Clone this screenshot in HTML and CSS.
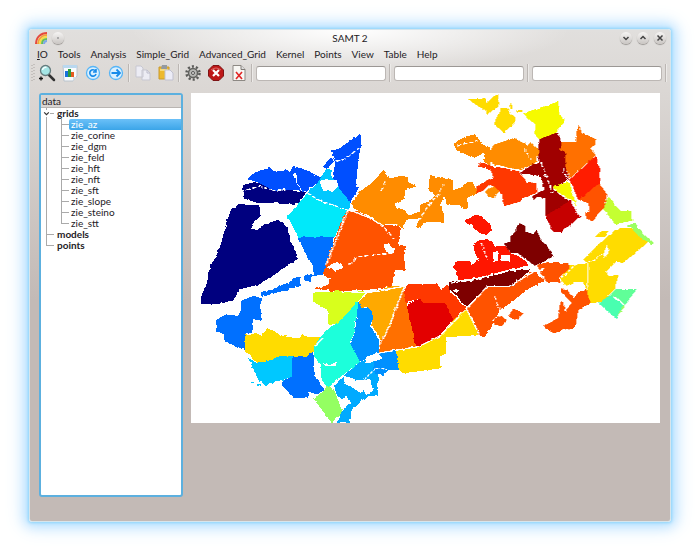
FILE: index.html
```html
<!DOCTYPE html>
<html lang="en">
<head>
<meta charset="utf-8">
<title>SAMT 2</title>
<link rel="stylesheet" href="styles.css">
</head>
<body>
<main class="window">
  <header class="titlebar">
    <div class="title-side">
      <svg class="logo" viewBox="0 0 14 14" fill="none" stroke-width="2"><path d="M2 13C2 6 7 2 13 2" stroke="#e5493d"/><path d="M4 13C4 8 8 4 13 4" stroke="#f5a13c"/><path d="M6 13C6 9 9 6 13 6" stroke="#f4df43"/><path d="M8 13C8 10 10 8 13 8" stroke="#66bd5b"/><path d="M10 13C10 11 11 10 13 10" stroke="#7da8e8"/></svg>
      <button class="round" aria-label="Pin"><svg viewBox="0 0 12 12"><circle class="dot" cx="6" cy="6" r="1"/></svg></button>
    </div>
    <h1>SAMT 2</h1>
    <div class="title-side title-end">
      <button class="round" aria-label="Minimize"><svg viewBox="0 0 12 12"><path d="M3.500 5 6 7.500 8.500 5"/></svg></button>
      <button class="round" aria-label="Maximize"><svg viewBox="0 0 12 12"><path d="M3.500 7 6 4.500 8.500 7"/></svg></button>
      <button class="round" aria-label="Close"><svg viewBox="0 0 12 12"><path d="m3.500 3.500 5 5m0-5-5 5"/></svg></button>
    </div>
  </header>
  <nav class="menu">
    <button><u>I</u>O</button><button>Tools</button><button>Analysis</button><button>Simple_Grid</button><button>Advanced_Grid</button><button>Kernel</button><button>Points</button><button>View</button><button>Table</button><button>Help</button>
  </nav>
  <div class="toolbar">
    <svg class="grip" viewBox="0 0 5 20"><path d="M2 2v17M4 1v18" stroke="#aaa5a2" stroke-dasharray="1 2"/></svg>
    <button class="tool" aria-label="Zoom"><svg viewBox="0 0 18 18"><path d="m11 11 5 5" stroke="#333" stroke-width="2.500" stroke-linecap="round"/><circle cx="7.500" cy="6.500" r="5" fill="#a5e5e5" stroke="#667b7d" stroke-width="1.300"/><path d="M4.500 6a3 3 0 0 1 4-2.500" stroke="#f4ffff" stroke-width="1.500" fill="none"/><path d="M3 12.500v4M1 14.500h4" stroke="#111" stroke-width="1.300"/></svg></button>
    <button class="tool" aria-label="Chart"><svg viewBox="0 0 18 18"><path d="M2 1.500h14V12l-4 5H3z" fill="#f9fbfd" stroke="#b8c3cd"/><path d="M2 1h14v3H2z" fill="#b9d8ef"/><path d="M4 7h3v6H4z" fill="#1971db"/><path d="M7 5h3v8H7z" fill="#2b9c3e"/><path d="M10 8h3v5h-3z" fill="#e65c20"/><path d="M12 17v-4h4z" fill="#d6dde3"/></svg></button>
    <button class="tool" aria-label="Refresh"><svg viewBox="0 0 18 18"><circle cx="9" cy="9" r="6.500" fill="#daf0ff" stroke="#57b5f6" stroke-width="1.300"/><path d="M11.500 7A3.200 3.200 0 1 0 12 10M12 5v3H9" fill="none" stroke="#178bea" stroke-width="1.600"/></svg></button>
    <button class="tool" aria-label="Forward"><svg viewBox="0 0 18 18"><circle cx="9" cy="9" r="6.500" fill="#daf0ff" stroke="#57b5f6" stroke-width="1.300"/><path d="M4.500 9h8M9.500 5.500 13 9l-3.500 3.500" fill="none" stroke="#178bea" stroke-width="1.800"/></svg></button>
    <span class="sep"></span>
    <button class="tool" aria-label="Copy"><svg viewBox="0 0 18 18"><path d="M2 2h5l2 2v9H2zM8 6h5l3 3v7H8z" fill="#ececf4" stroke="#c7c7d1"/><path d="M13 6v3h3" fill="none" stroke="#bcbccb"/></svg></button>
    <button class="tool" aria-label="Paste"><svg viewBox="0 0 18 18"><path d="M2 3h10v12H2z" fill="#edb92f" stroke="#c99a2e"/><path d="M5 1h5v4H4z" fill="#949aa1"/><path d="M3 6h8" stroke="#f7da78" stroke-width="2"/><path d="M8 6h5l3 3v7H8z" fill="#ececf7" stroke="#c1c1cf"/></svg></button>
    <span class="sep"></span>
    <button class="tool" aria-label="Settings"><svg viewBox="0 0 18 18"><circle cx="9" cy="9" r="6.500" fill="none" stroke="#5b5b59" stroke-width="2.500" stroke-dasharray="2.100 2"/><circle cx="9" cy="9" r="4.500" fill="#b8b8b5" stroke="#62625f" stroke-width="1.500"/><circle cx="9" cy="9" r="1.500" fill="#e5e4e1" stroke="#555"/></svg></button>
    <button class="tool" aria-label="Stop"><svg viewBox="0 0 18 18"><path d="m6 1.500h6L16.500 6v6L12 16.500H6L1.500 12V6z" fill="#bd1717" stroke="#7d1415"/><path d="M4 6q5-4 10 0" stroke="#dd6b68" fill="none"/><path d="m6 6 6 6m0-6-6 6" stroke="#fff" stroke-width="2.200"/></svg></button>
    <button class="tool" aria-label="Delete document"><svg viewBox="0 0 18 18"><path d="M3 1.500h8l4 4v11H3z" fill="#f8f7f4" stroke="#8d8984"/><path d="M11 1.500v4h4" fill="#ddd" stroke="#807b76"/><path d="m6 8 6 7m0-7-6 7" stroke="#e12626" stroke-width="1.600"/></svg></button>
    <span class="sep"></span>
    <input type="text" aria-label="First value">
    <span class="sep"></span>
    <input type="text" aria-label="Second value">
    <span class="sep"></span>
    <input type="text" aria-label="Third value">
    <span class="sep"></span>
  </div>
  <div class="content">
    <aside class="tree">
      <h2>data</h2>
      <ul class="roots">
        <li><span class="arrow"><svg viewBox="0 0 6 6"><path d="m1 2 2 2 2-2"/></svg></span><b>grids</b>
          <ul class="leaves">
            <li><span class="selected">zie_az</span></li><li><span>zie_corine</span></li><li><span>zie_dgm</span></li><li><span>zie_feld</span></li><li><span>zie_hft</span></li><li><span>zie_nft</span></li><li><span>zie_sft</span></li><li><span>zie_slope</span></li><li><span>zie_steino</span></li><li><span>zie_stt</span></li>
          </ul>
        </li>
        <li><b>models</b></li>
        <li><b>points</b></li>
      </ul>
    </aside>
    <svg class="map" viewBox="0 0 1407 990" role="img" aria-label="Grid zie_az">
      <defs><filter id="rough" x="0" y="0" width="100%" height="100%"><feTurbulence type="fractalNoise" baseFrequency=".06" numOctaves="2" seed="4"/><feDisplacementMap in="SourceGraphic" scale="9" xChannelSelector="R" yChannelSelector="G"/></filter></defs>
      <rect width="1407" height="990" fill="#fff"/>
      <g filter="url(#rough)" shape-rendering="crispEdges">
      <g transform="translate(-3 -9)">
        <path fill="#00007f" d="M153 300 160 286 180 280 200 278 225 285 247 300 330 302 348 308 325 340 270 343 262 331 250 339 200 338 163 327 163 310ZM125 356 150 343 208 345 212 378 190 400 183 420 203 420 225 402 265 390 290 410 300 450 325 505 240 563 200 585 150 598 130 630 85 643 33 643 33 618 50 585 60 530 78 500 90 470 102 430 108 400Z"/>
        <path fill="#0050ff" d="M172 267 195 247 240 233 257 247 290 238 300 246 308 228 330 232 392 262 385 276 350 305 330 300 247 300 205 278ZM422 180 445 178 480 152 512 132 512 170 505 210 497 290 508 290 482 335 440 295 430 265 435 215ZM400 230 425 200 432 212 410 238Z"/>
        <path fill="#00c8ff" d="M392 262 410 235 425 240 427 265 440 275 448 295 480 335 480 362 445 350 400 338 352 310 385 275ZM175 805 200 818 270 798 307 798 307 860 270 872 225 885 205 870ZM180 875h10v5h-10ZM200 882l14 2v6l-14-2Z"/>
        <path fill="#00e9fa" d="M352 310 400 340 445 350 472 362 435 440 380 443 325 443 293 378Z"/>
        <path fill="#0070ff" d="M325 443 375 440 433 440 400 553 362 560 362 575 343 573 343 557 368 552 368 525 355 508ZM213 606 245 599 300 575 320 560 330 560 330 588 250 611 215 621ZM153 632 185 620 215 620 213 682 217 688 190 690 187 730 167 730 165 780 105 755 100 730 78 725 78 690 105 675 145 677 153 660ZM307 798 350 795 370 772 372 860 385 870 402 895 385 913 355 905 355 925 310 925 290 900 275 885 275 873 307 860Z"/>
        <path fill="#ffdc00" d="M165 732 200 730 215 738 232 714 255 725 270 735 300 742 330 745 337 732 352 740 390 742 388 765 365 790 350 797 270 798 230 815 200 818 175 793 165 785Z"/>
        <path fill="#94ff62" d="M370 925 390 912 415 885 435 905 457 965 425 999Z"/>
        <path fill="#d8ff1c" d="M368 608 480 602 530 605 500 640 475 668 440 702 415 705 412 660 370 635Z"/>
        <path fill="#1affdb" d="M390 742 415 715 440 700 475 668 500 635 512 645 497 685 495 725 480 755 510 815 460 855 415 890 395 870 390 820 372 800 372 770Z"/>
        <path fill="#00aaff" d="M433 890 455 862 510 815 565 800 582 855 565 850 565 915 530 920 485 960 480 999 440 999 455 965 475 945 440 915Z"/>
        <path fill="#fff" d="M388 275 400 270 440 270 445 290 430 305 400 303ZM308 248 322 250 322 280 340 305 322 285ZM400 820 420 825 440 815 438 828 405 829ZM455 855 500 870 540 868 550 885 510 910 490 895 462 880ZM450 930 470 920 485 940 460 950ZM522 905 545 885 550 900 530 915Z"/>
      </g>
      <g transform="translate(447 -9)">
        <path fill="#ff8c00" d="M33 340 60 305 105 270 130 238 150 265 185 257 205 262 203 275 228 290 195 300 195 325 165 340 168 355 190 358 205 375 240 365 240 345 275 330 285 315 265 300 270 255 285 260 315 265 340 272 340 300 370 290 385 275 398 278 410 300 410 310 380 325 385 355 370 358 365 345 320 345 315 320 300 345 312 372 310 398 260 395 235 415 228 410 240 385 200 388 190 415 160 402 120 402 85 375 50 362ZM340 162 375 140 405 132 415 150 465 190 480 175 480 220 450 225 430 210 435 188 400 205 350 180Z"/>
        <path fill="#ff5200" d="M20 362 50 362 85 380 120 402 165 405 182 415 175 462 200 470 190 485 197 540 165 540 155 590 80 600-30 605-35 600-75 597-35 583-30 565-52 555-40 510 0 405ZM380 655 440 590 510 592 570 545 590 545 595 560 630 570 600 578 560 600 510 640 480 660 455 710 435 740 415 735 405 700Z"/>
        <path fill="#0090ff" d="M55 635 75 655 90 650 100 680 90 705 117 750 117 790 60 815 30 760 45 730 50 680ZM100 835 105 805 120 790 168 780 175 840 145 840 130 855 105 850Z"/>
        <path fill="#ffa900" d="M55 635 85 608 160 588 192 590 170 650 150 715 122 750 95 705 100 670 80 650 65 655Z"/>
        <path fill="#ff7000" d="M190 595 200 640 230 770 170 778 117 790 122 750 152 710 172 640Z"/>
        <path fill="#ff3700" d="M205 583 290 583 305 597 320 585 330 588 330 605 378 655 340 690 315 640 250 640 240 625 200 640 190 597Z"/>
        <path fill="#e30000" d="M200 645 240 625 250 640 315 640 340 690 290 745 240 770 228 768Z"/>
        <path fill="#ffdc00" d="M378 657 390 675 415 735 317 742 320 790 300 800 302 835 190 850 175 840 168 780 230 772 300 740 340 690Z"/>
        <path fill="#ff1800" d="M375 392 410 372 450 400 455 420 440 435 420 430 390 405ZM400 462 420 450 455 452 465 470 480 467 500 470 510 490 540 500 570 525 450 555 400 565 355 570 350 545 340 530 350 515 385 512 395 525 415 510 405 490Z"/>
        <path fill="#7e0000" d="M330 575 400 570 480 552 510 543 572 538 545 565 510 592 440 590 380 652 330 597Z"/>
        <path fill="#fff" d="M130 465 145 458 165 480 160 490 140 487ZM-40 532-15 517 10 525 5 535-15 543ZM460 487h14v26h-14ZM483 495h26v19h-28ZM338 600 358 596 350 610ZM75 802 110 790 130 802 110 815 75 820Z"/>
      </g>
      <g transform="translate(897 -9)">
        <path fill="#ffdc00" d="M-65 28-13 25-10 40 10 20 25 12 25 50 10 60-5 75-15 60-35 50ZM15 90 30 65 30 55 52 55 60 70 75 80 75 100 40 127 15 105ZM60 40h5v18h-7ZM80 59 97 61 95 67 80 64ZM280 510 335 455 375 420 430 412 450 440 475 455 430 495 395 520 380 515 350 545 355 558 385 555 375 595 340 635 300 640 290 600 280 575 255 575 225 590 210 565 240 525 290 520ZM315 440 330 425 358 422 340 442Z"/>
        <path fill="#ff8c00" d="M0 185 10 165 70 145 115 165 122 157 145 180 142 215 95 240 40 230 0 220ZM-15 305 10 288 28 295 15 325-5 320Z"/>
        <path fill="#ff3700" d="M-35 230-28 215 5 228 85 242 110 275 140 280 138 310 95 325 90 335 45 348 35 315 15 290 0 285-20 300-40 310-42 290 10 260 0 238Z"/>
        <path fill="#f6fa06" d="M98 70 205 35 210 80 227 92 205 115 200 128 147 148 133 130 137 105Z"/>
        <path fill="#a00000" d="M147 148 200 128 212 150 215 180 230 190 225 230 238 270 190 290 190 300 240 335 165 378 165 325 140 320 130 332 127 318 160 300 155 265 135 255 88 250 130 222 148 220 145 190Z"/>
        <path fill="#c60000" d="M165 378 240 332 250 350 270 380 215 425 190 425Z"/>
        <path fill="#f6fa06" d="M190 287 238 275 258 345 230 320 200 305Z"/>
        <path fill="#ff7000" d="M215 155 255 155 260 125 268 105 275 130 300 140 318 148 315 165 300 175 318 195 280 230 240 265 225 230 228 190 208 180Z"/>
        <path fill="#ff1a00" d="M320 195 322 220 330 235 328 280 265 330 240 268Z"/>
        <path fill="#ff5200" d="M328 280 352 315 345 350 325 370 310 395 285 385 285 370 300 365 295 340 265 330ZM140 525 180 515 235 520 240 535 210 560 210 578 170 575ZM213 592 235 605 250 625 265 605 290 600 300 640 265 660 257 710 190 730 158 710 205 685 210 640 218 630 225 665 245 640 215 610ZM10 690 30 675 50 690 35 708 15 705ZM55 680 70 655 100 670 75 690Z"/>
        <path fill="#c4ff30" d="M355 320 390 362 420 365 430 392 375 402 340 358Z"/><path fill="#9bff62" d="M405 408 435 400 465 435 493 460 485 462 440 435 425 412ZM378 685 400 645 405 648Z"/>
        <path fill="#60ff98" d="M375 598 440 598 405 645 385 625 360 615Z"/><path fill="#48ffb0" d="M325 640 360 615 400 645 378 685Z"/>
        <path fill="#7e0000" d="M60 440 80 425 78 410 90 400 105 408 105 425 130 432 140 422 155 455 170 465 190 500 170 510 135 527 110 510 85 490 60 490 42 460 60 455Z"/>
        <path fill="#fff" d="M340 495 350 465 358 485 345 502Z"/>
      </g>
      <g fill="none" stroke="#fff" stroke-width="4">
        <path stroke-dasharray="12 6" d="M150 295 205 280 245 291H293M350 300 390 325 445 342M435 205 458 200 505 165M582 265 570 292M759 270 745 300 710 340 685 380M568 394 608 435M475 515 500 491 610 480M800 156 860 145M897 212 990 235M1050 210 1085 300M1115 225 1135 272M1000 165 1020 200M910 610 930 660"/>
        <path d="M405 515 470 355M470 350 530 372 570 394H620M450 595 530 599 640 580M640 580 595 700 565 760M565 780 685 760 745 730 827 647 865 725M827 647 890 580 955 580 1030 535 1060 530M782 570 850 560 940 535 1010 525M1038 530 1070 575M1190 510 1190 590M370 760 395 735"/>
        <path stroke-dasharray="8 5" d="M1180 510 1210 502 1235 480M870 450 890 500M520 860 555 825 590 830M900 680 950 660M1135 590 1105 560 1165 505"/>
      </g>
      </g>
    </svg>
  </div>
</main>
</body>
</html>
```
FILE: styles.css
```css
* { box-sizing: border-box; }
body { margin: 0; padding: 29px 29px 30px; background: #fff; color: #24211f; font: 10px/11px Lato, "Noto Sans", sans-serif; }
button { border: 0; padding: 0; background: none; color: inherit; font: inherit; }
h1, h2 { margin: 0; font: inherit; }
ul { list-style: none; margin: 0; padding: 0; }
.window {
  display: flex; flex-direction: column; min-height: calc(100vh - 59px);
  border-radius: 3px; border: 1px solid #d6e5ec;
  background: radial-gradient(ellipse 220px 42px at 50% 0, #fff, transparent), linear-gradient(#e1dfdd 0, #dbd7d4 60px, #c3bab6 270px);
  box-shadow: 0 0 3px 1px #8fd5fb, 0 0 12px 4px #b5e1ff, 0 0 20px 6px #dceeff;
}
.titlebar { display: flex; align-items: center; height: 16px; padding: 0 4px; }
.title-side { flex: 1; display: flex; align-items: center; gap: 4px; }
.title-end { justify-content: flex-end; gap: 5px; }
.logo { width: 14px; height: 14px; }
.round { width: 12px; height: 12px; border-radius: 50%; background: linear-gradient(#f6f5f4, #c9c5c2); box-shadow: 0 1px 1px #9a9693; }
.round svg { display: block; width: 12px; height: 12px; fill: none; stroke: #444; stroke-width: 1.5; }
.round .dot { fill: #999; stroke: none; }
.menu { display: flex; gap: 10px; height: 16px; padding: 0 7px; align-items: center; }
.toolbar { display: flex; align-items: center; height: 22px; padding-right: 2px; }
.grip { width: 5px; height: 20px; }
.tool { width: 23px; height: 20px; display: grid; place-items: center; }
.tool svg { width: 18px; height: 18px; }
.sep { width: 1px; height: 18px; margin: 0 2px 0 1px; background: #bbb6b3; box-shadow: 1px 0 #eceae8; }
.toolbar input { flex: 1; min-width: 0; height: 15px; margin: 0 2px; border: 1px solid #bcb7b4; border-top-color: #9b9794; border-radius: 3px; background: #fff; padding: 0 3px; font: inherit; }
.toolbar .sep { flex: none; }
.content { flex: 1; display: flex; align-items: flex-start; gap: 8px; padding: 9px 10px 24px 9px; }
.tree { width: 144px; flex: none; align-self: stretch; border: 2px solid #5cb0df; border-radius: 3px; background: #fff; }
.tree h2 { height: 13px; padding: 1px 1px 0; background: #d9d5d2; border-bottom: 1px solid #b9b5b2; }
.tree b { font-weight: 700; }
.roots > li { position: relative; padding-left: 16px; }
.roots > li::before { content: ""; position: absolute; left: 5px; top: 0; height: 100%; border-left: 1px solid #aaa; }
.roots > li:last-child::before { height: 6px; }
.roots > li::after { content: ""; position: absolute; left: 6px; top: 5px; width: 7px; border-top: 1px solid #aaa; }
.arrow { position: absolute; z-index: 1; left: 2px; top: 2px; width: 7px; height: 7px; background: #fff; }
.arrow svg { display: block; width: 7px; height: 7px; fill: none; stroke: #333; }
.leaves li { position: relative; padding-left: 12px; }
.leaves li::before { content: ""; position: absolute; left: 4px; top: 0; height: 100%; border-left: 1px solid #aaa; }
.leaves li:last-child::before { height: 6px; }
.leaves li::after { content: ""; position: absolute; left: 5px; top: 5px; width: 7px; border-top: 1px solid #aaa; }
.leaves span { display: block; padding-left: 2px; }
.leaves .selected { color: #fff; background: linear-gradient(#6bc0f8, #3ba5e8); border-radius: 2px 0 0 2px; }
.map { flex: 1; min-width: 0; display: block; }
```
